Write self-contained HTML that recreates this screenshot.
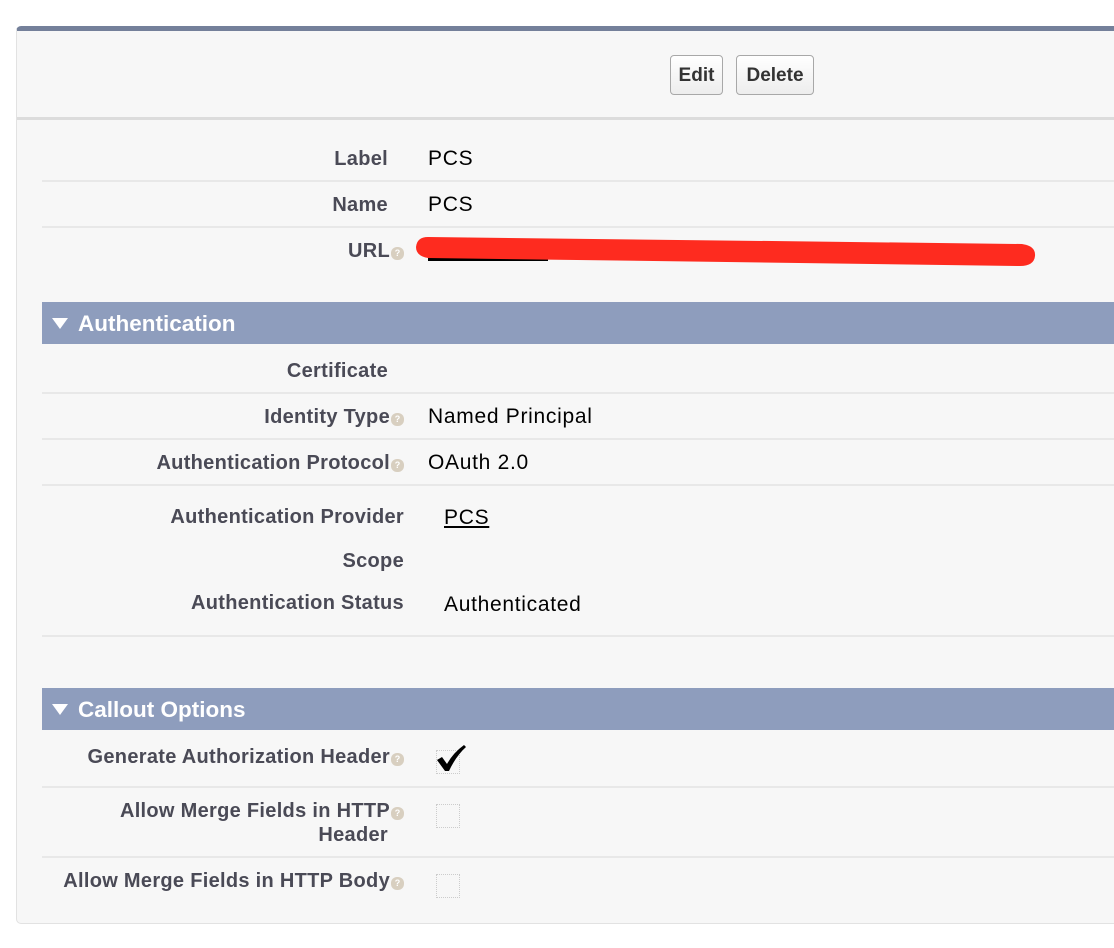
<!DOCTYPE html>
<html><head><style>
body{margin:0;width:1114px;height:948px;background:#fff;position:relative;overflow:hidden;font-family:"Liberation Sans",Arial,sans-serif;}
.panel{position:absolute;left:16px;top:26px;width:1120px;height:898px;background:#f7f7f7;border:1px solid #e2e2e2;border-top:5px solid #74809a;border-radius:5px 0 0 5px;box-sizing:border-box;}
.a{position:absolute;}
.lab{position:absolute;font-weight:bold;font-size:20px;letter-spacing:0.3px;color:#4a4a56;text-align:right;white-space:nowrap;}
.val{position:absolute;font-size:21px;letter-spacing:0.7px;color:#000;white-space:nowrap;}
.line{position:absolute;left:42px;right:0;height:2px;background:#e8e8e8;}
.q{display:inline-block;width:13px;height:13px;border-radius:6px;background:#d8cfc0;color:#fff;font-size:9px;line-height:13px;text-align:center;vertical-align:1px;margin-left:1px;letter-spacing:0;}
.sec{position:absolute;left:42px;right:0;height:42px;background:#8e9dbd;color:#fff;font-weight:bold;font-size:22.5px;line-height:44px;}
.sec span.t{position:absolute;left:10px;top:16px;width:0;height:0;border-left:8px solid transparent;border-right:8px solid transparent;border-top:11px solid #fff;}
.btn{position:absolute;top:55px;height:40px;border:1px solid #a8a8a8;border-radius:4px;background:linear-gradient(#fff,#ededed);font-weight:bold;font-size:19px;color:#333;line-height:40px;text-align:center;box-sizing:border-box;}
.cb{position:absolute;width:24px;height:24px;border:1px dotted #ccc;box-sizing:border-box;}
</style></head><body>
<div class="panel"></div>
<div class="a" style="left:17px;top:117px;width:1100px;height:3px;background:#dcdcdc"></div>
<div class="btn" style="left:670px;width:53px">Edit</div>
<div class="btn" style="left:736px;width:78px">Delete</div>

<div class="lab" style="right:726px;top:148px">Label</div><div class="val" style="left:428px;top:147px">PCS</div>
<div class="line" style="top:180px"></div>
<div class="lab" style="right:726px;top:194px">Name</div><div class="val" style="left:428px;top:193px">PCS</div>
<div class="line" style="top:226px"></div>
<div class="lab" style="right:710px;top:240px">URL<span class="q">?</span></div>
<div class="a" style="left:428px;top:258px;width:120px;height:3px;background:#000"></div>
<svg class="a" style="left:0;top:0" width="1114" height="300"><path d="M428 237 L1022 244 Q1036 246 1035 256 Q1034 266 1020 266 L428 258 Q416 256 416 247 Q417 237 428 237Z" fill="#fe2b1f"/></svg>

<div class="sec" style="top:302px"><span class="t"></span><span style="position:absolute;left:36px">Authentication</span></div>
<div class="lab" style="right:726px;top:360px">Certificate</div>
<div class="line" style="top:392px"></div>
<div class="lab" style="right:710px;top:406px">Identity Type<span class="q">?</span></div><div class="val" style="left:428px;top:405px">Named Principal</div>
<div class="line" style="top:438px"></div>
<div class="lab" style="right:710px;top:452px">Authentication Protocol<span class="q">?</span></div><div class="val" style="left:428px;top:451px">OAuth 2.0</div>
<div class="line" style="top:484px"></div>
<div class="lab" style="right:710px;top:506px">Authentication Provider</div><div class="val" style="left:444px;top:506px;text-decoration:underline">PCS</div>
<div class="lab" style="right:710px;top:550px">Scope</div>
<div class="lab" style="right:710px;top:592px">Authentication Status</div><div class="val" style="left:444px;top:593px">Authenticated</div>
<div class="line" style="top:635px"></div>

<div class="sec" style="top:688px"><span class="t"></span><span style="position:absolute;left:36px">Callout Options</span></div>
<div class="lab" style="right:710px;top:746px">Generate Authorization Header<span class="q">?</span></div>
<div class="cb" style="left:436px;top:750px"></div>
<svg class="a" style="left:436px;top:744px" width="32" height="30"><path d="M1 16 L6 13 L11 20 Q17 9 28 1 L30 3 Q20 12 13 27 L9 27 Z" fill="#000"/></svg>
<div class="line" style="top:786px"></div>
<div class="lab" style="right:710px;top:800px">Allow Merge Fields in HTTP<span class="q">?</span></div>
<div class="lab" style="right:726px;top:824px">Header</div>
<div class="cb" style="left:436px;top:804px"></div>
<div class="line" style="top:856px"></div>
<div class="lab" style="right:710px;top:870px">Allow Merge Fields in HTTP Body<span class="q">?</span></div>
<div class="cb" style="left:436px;top:874px"></div>
</body></html>
